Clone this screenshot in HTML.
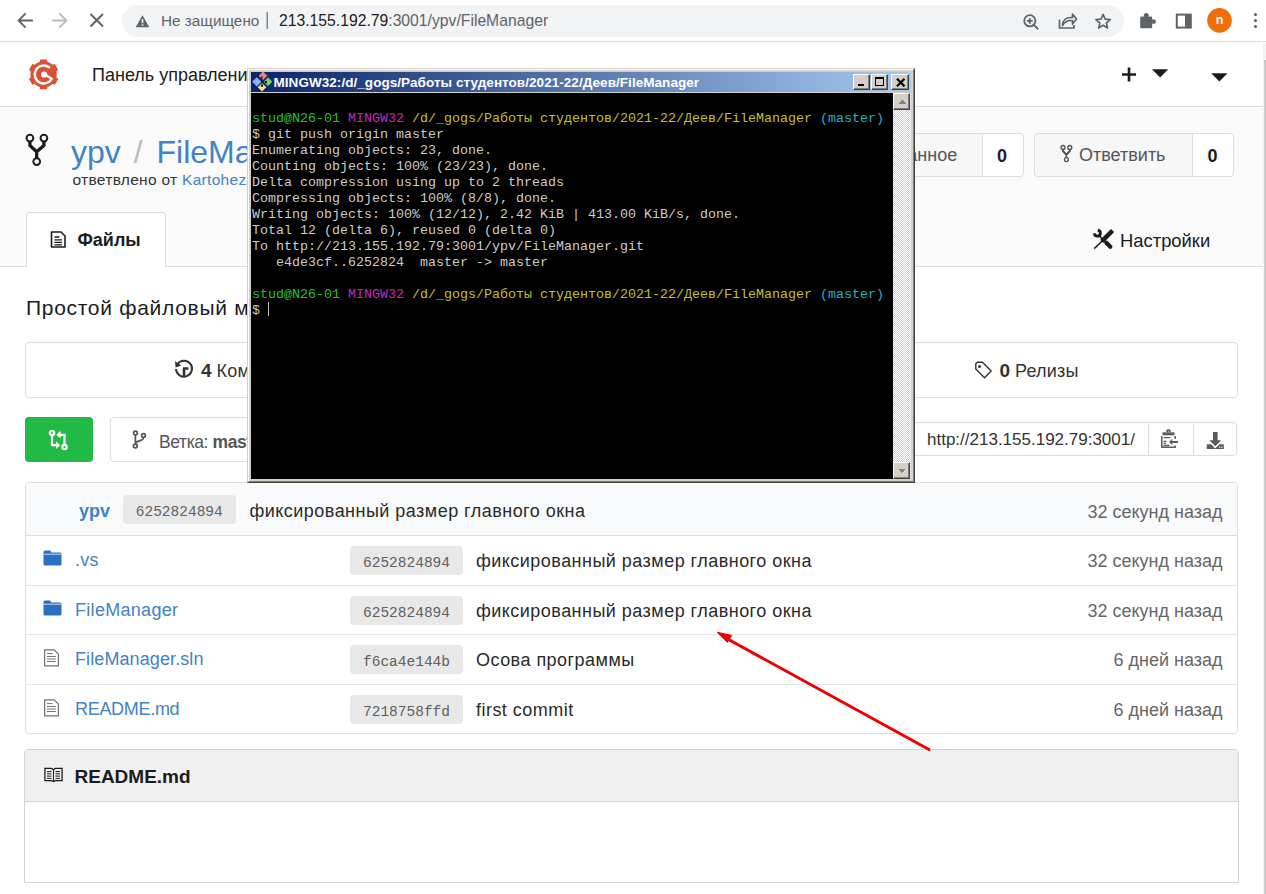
<!DOCTYPE html>
<html><head><meta charset="utf-8">
<style>
*{box-sizing:border-box;margin:0;padding:0}
html,body{width:1266px;height:894px;overflow:hidden;background:#fff;font-family:"Liberation Sans",sans-serif;color:#333}
.a{position:absolute}
.nw{white-space:nowrap}
/* chrome */
#chrome{left:0;top:0;width:1266px;height:42px;background:#fff;border-bottom:1px solid #dadce0}
#omni{left:122px;top:5px;width:1002px;height:32px;border-radius:16px;background:#f1f3f4}
/* gogs header */
#ghead{left:0;top:42px;width:1266px;height:65px;background:#fff;border-bottom:1px solid #ddd}
#rhead{left:0;top:107px;width:1266px;height:160px;background:#fafafa;border-bottom:1px solid #ddd}
.btn{border:1px solid #ddd;border-radius:4px}
.sha{background:#e8e8e8;border-radius:4px;font-family:"Liberation Mono",monospace;font-size:14.5px;color:#606060;text-align:center}
.term{font-family:"Liberation Mono",monospace;font-size:13.33px;line-height:16px;color:#cccccc;white-space:pre}
.g{color:#28c028}.m{color:#c028c0}.y{color:#c0c028}.c{color:#28b0c0}
.msg{font-size:18px;letter-spacing:0.47px;color:#2a2a2a}
.tm{font-size:18px;color:#666}
.fn{font-size:18px;letter-spacing:0.3px;color:#4183c4}
.tb{width:17px;height:16px;background:#d4d0c8;border-top:1px solid #fff;border-left:1px solid #fff;border-right:1px solid #404040;border-bottom:1px solid #404040;box-shadow:inset -1px -1px 0 #808080}
.sb{width:17px;height:17px;background:#d4d0c8;border-top:1px solid #fff;border-left:1px solid #fff;border-right:1px solid #404040;border-bottom:1px solid #404040;box-shadow:inset -1px -1px 0 #808080}
</style></head><body>

<!-- Chrome toolbar -->
<div id="chrome" class="a"></div>
<div id="omni" class="a"></div>

<!-- nav icons -->
<svg class="a" style="left:0;top:0" width="1266" height="42">
  <g fill="none" stroke="#5f6368" stroke-width="1.8" stroke-linecap="square">
    <path d="M32 20.5H19M25 14L18.5 20.5L25 27"/>
  </g>
  <g fill="none" stroke="#b9bbbe" stroke-width="1.8" stroke-linecap="square">
    <path d="M53 20.5H66M60 14L66.5 20.5L60 27"/>
  </g>
  <g fill="none" stroke="#5f6368" stroke-width="2">
    <path d="M90.5 14L103 26.5M103 14L90.5 26.5"/>
  </g>
  <path d="M142.5 15.2L149.3 27.2H135.7Z" fill="#5f6368"/>
  <rect x="141.7" y="19" width="1.6" height="4.2" fill="#f1f3f4"/>
  <rect x="141.7" y="24.2" width="1.6" height="1.6" fill="#f1f3f4"/>
  <rect x="266.5" y="12" width="1.5" height="17" fill="#80868b"/>
  <!-- zoom -->
  <g fill="none" stroke="#5f6368" stroke-width="1.8">
    <circle cx="1029.8" cy="20.8" r="5.6"/>
    <path d="M1034 25l4.3 4.3M1026.9 20.8h5.8M1029.8 17.9v5.8"/>
  </g>
  <!-- share -->
  <g fill="none" stroke="#5f6368" stroke-width="1.7" stroke-linejoin="round">
    <path d="M1059.5 19.5v8.5h14.5v-3"/>
    <path d="M1062.5 25.5c0-5 3.5-8 8.5-8h1.5v-3.5l4 5-4 5v-3.5h-1.5c-3.5 0-6.5 1.5-8.5 5z"/>
  </g>
  <!-- star -->
  <path d="M1103.10 14.30L1105.10 19.15L1110.33 19.55L1106.33 22.95L1107.57 28.05L1103.10 25.30L1098.63 28.05L1099.87 22.95L1095.87 19.55L1101.10 19.15z" fill="none" stroke="#5f6368" stroke-width="1.6" stroke-linejoin="round"/>
  <!-- puzzle -->
  <g fill="#5f6368"><rect x="1140.2" y="16.6" width="12" height="11.6" rx="1.3"/><circle cx="1146.3" cy="15.3" r="2.4"/><circle cx="1153.6" cy="21.6" r="2.4"/></g>
  <!-- sidebar -->
  <rect x="1176.8" y="14.6" width="14" height="13" fill="none" stroke="#5f6368" stroke-width="2"/>
  <rect x="1185" y="14.6" width="6" height="13" fill="#5f6368"/>
  <!-- avatar -->
  <circle cx="1219.5" cy="20.4" r="12.3" fill="#ed6f06"/>
  <!-- dots -->
  <g fill="#5f6368"><circle cx="1255.5" cy="14.5" r="1.6"/><circle cx="1255.5" cy="20.5" r="1.6"/><circle cx="1255.5" cy="26.5" r="1.6"/></g>
</svg>
<div class="a nw" style="left:1215.8px;top:13px;font-size:12.5px;font-weight:bold;color:#fff">n</div>
<div class="a nw" style="left:161px;top:11.5px;font-size:15.3px;color:#5f6368">Не защищено</div>
<div class="a nw" style="left:279px;top:11.5px;font-size:15.72px;color:#202124">213.155.192.79<span style="color:#5f6368">:3001/ypv/FileManager</span></div>

<!-- Gogs header -->
<div id="ghead" class="a"></div>

<svg class="a" style="left:0;top:42px" width="1266" height="65">
  <g transform="translate(43.6,32.4)">
    <path fill="#db5131" d="M-3.86 -12.62L-3.31 -14.94L3.31 -14.94L3.86 -12.62A13.2 13.2 0 0 1 9.00 -9.65L11.28 -10.34L14.59 -4.60L12.86 -2.97A13.2 13.2 0 0 1 12.86 2.97L14.59 4.60L11.28 10.34L9.00 9.65A13.2 13.2 0 0 1 3.86 12.62L3.31 14.94L-3.31 14.94L-3.86 12.62A13.2 13.2 0 0 1 -9.00 9.65L-11.28 10.34L-14.59 4.60L-12.86 2.97A13.2 13.2 0 0 1 -12.86 -2.97L-14.59 -4.60L-11.28 -10.34L-9.00 -9.65A13.2 13.2 0 0 1 -3.86 -12.62Z"/>
    <path fill="none" stroke="#fff" stroke-width="2.4" stroke-linecap="round" d="M5.6-7.1A9 9 0 1 0 8.1 4.4L3 1.2"/>
    <circle cx="0.5" cy="0.1" r="3.1" fill="#fff"/>
  </g>
  <path d="M1129 25.5v14M1122 32.5h14" stroke="#1b1c1d" stroke-width="2.6" fill="none"/>
  <path d="M1152 27.2h16.2l-8.1 8.4z" fill="#1b1c1d"/>
  <path d="M1211.2 31.2h16.3l-8.15 8.4z" fill="#1b1c1d"/>
</svg>
<div class="a nw" style="left:92px;top:65px;font-size:18px;color:#1b1c1d">Панель управления</div>

<!-- repo header -->
<div id="rhead" class="a"></div>

<svg class="a" style="left:20px;top:128px" width="36" height="42" viewBox="0 0 36 42">
  <g fill="none" stroke="#1b1c1d">
    <circle cx="9.9" cy="10.1" r="3.4" stroke-width="1.9"/>
    <circle cx="23.9" cy="10.1" r="3.4" stroke-width="1.9"/>
    <circle cx="16.7" cy="33.6" r="3.4" stroke-width="1.9"/>
    <path d="M9.9 13.5v4l6.8 6.2 7.2-6.2v-4M16.7 23.5v6.7" stroke-width="3.3"/>
  </g>
</svg>
<div class="a nw" style="left:71px;top:134px;font-size:32px;color:#4183c4">ypv <span style="color:#bbb;margin:0 5px 0 4px">/</span> FileManager</div>
<div class="a nw" style="left:72.5px;top:171px;font-size:15.5px;letter-spacing:0.3px;color:#333">ответвлено от <span style="color:#4183c4">Kartohez/FileManager</span></div>
<!-- star/watch buttons -->
<div class="a btn" style="left:800px;top:132.5px;width:223.5px;height:44px;background:#f7f7f7"></div>
<div class="a" style="left:982px;top:133.5px;width:40.5px;height:42px;background:#fff;border-left:1px solid #ddd;border-radius:0 4px 4px 0"></div>
<div class="a nw" style="left:866px;top:145px;font-size:18px;color:#555">Избранное</div>
<div class="a nw" style="left:997px;top:146px;font-size:18px;font-weight:bold;color:#1b1c1d">0</div>
<div class="a btn" style="left:1034.4px;top:132.5px;width:199.2px;height:44px;background:#f7f7f7"></div>
<div class="a" style="left:1191.6px;top:133.5px;width:41px;height:42px;background:#fff;border-left:1px solid #ddd;border-radius:0 4px 4px 0"></div>
<svg class="a" style="left:1055px;top:140px" width="22" height="26" viewBox="0 0 22 26">
  <g fill="none" stroke="#505050">
    <circle cx="8" cy="7.5" r="2" stroke-width="1.3"/>
    <circle cx="14.8" cy="7.5" r="2" stroke-width="1.3"/>
    <circle cx="11.4" cy="19.6" r="2" stroke-width="1.3"/>
    <path d="M8 9.5v1.5l3.4 3.8 3.4-3.8v-1.5M11.4 14.8v2.9" stroke-width="2"/>
  </g>
</svg>
<div class="a nw" style="left:1079px;top:145px;font-size:18px;color:#555">Ответвить</div>
<div class="a nw" style="left:1207.5px;top:146px;font-size:18px;font-weight:bold;color:#1b1c1d">0</div>
<!-- tabs -->
<div class="a" style="left:25.5px;top:212px;width:140.5px;height:56px;background:#fff;border:1px solid #ddd;border-bottom:none;border-radius:4px 4px 0 0"></div>
<svg class="a" style="left:50px;top:231px" width="17" height="17" viewBox="0 0 17 17">
  <path d="M1.5 1h9.5l4 4v11h-13.5z" fill="none" stroke="#1b1c1d" stroke-width="1.6" stroke-linejoin="round"/>
  <path d="M4.5 6h5M4.5 8.8h7.5M4.5 11.3h7.5M4.5 13.8h7.5" stroke="#1b1c1d" stroke-width="1.3"/>
</svg>
<div class="a nw" style="left:77.5px;top:230px;font-size:18px;font-weight:bold;color:#1b1c1d">Файлы</div>
<svg class="a" style="left:1085px;top:222px" width="34" height="34" viewBox="0 0 34 34">
  <path d="M9.4 11.4A3 3 0 1 0 12.8 8.2" fill="none" stroke="#1b1c1d" stroke-width="2.9"/>
  <path d="M14.3 13.8L19 18.5" stroke="#1b1c1d" stroke-width="1.6"/>
  <path d="M21.3 20.8L25.3 24.8" stroke="#1b1c1d" stroke-width="4.2" stroke-linecap="round"/>
  <path d="M26 10.1L18.3 17.8" stroke="#1b1c1d" stroke-width="4.4" stroke-linecap="square"/>
  <path d="M17.5 18.8L9.2 26.6" stroke="#1b1c1d" stroke-width="1.5"/>
</svg>
<div class="a nw" style="left:1120px;top:229.7px;font-size:18.4px;color:#1b1c1d">Настройки</div>


<div class="a nw" style="left:26px;top:296px;font-size:21px;letter-spacing:0.7px;color:#1b1c1d">Простой файловый менеджер</div>
<!-- stats -->
<div class="a btn" style="left:25px;top:342px;width:1213px;height:56px;background:#fff"></div>
<svg class="a" style="left:174px;top:359px" width="20" height="20" viewBox="0 0 20 20">
  <path d="M3.3 5.3A8 8 0 1 1 2 10" fill="none" stroke="#333" stroke-width="2"/>
  <path d="M1 2.2l0.6 6.2 5.8-2z" fill="#333"/>
  <path d="M9 9.5h5.5M10 9.5v8" stroke="#333" stroke-width="2.6"/>
</svg>
<div class="a nw" style="left:201px;top:360px;font-size:18px;color:#333"><b style="font-size:19px">4</b> <span style="letter-spacing:0.2px">Коммиты</span></div>
<svg class="a" style="left:974px;top:361px" width="20" height="18" viewBox="0 0 20 18">
  <path d="M1.8 2.8v5.2l8.7 8.7 6.7-6.7-8.7-8.7h-5.2z" fill="none" stroke="#333" stroke-width="1.4" stroke-linejoin="round"/>
  <circle cx="5.5" cy="5.5" r="1.5" fill="#333"/>
</svg>
<div class="a nw" style="left:999.5px;top:360px;font-size:18px;color:#333"><b style="font-size:19px">0</b> <span style="letter-spacing:0.2px">Релизы</span></div>
<!-- green button -->
<div class="a" style="left:25px;top:417px;width:68px;height:45px;background:#21ba45;border-radius:4px"></div>
<svg class="a" style="left:48px;top:429px" width="21" height="22" viewBox="0 0 21 22">
  <g fill="none" stroke="#fff" stroke-width="2.2">
    <circle cx="4" cy="4" r="2.2"/><circle cx="16.5" cy="18" r="2.2"/>
    <path d="M4 6.2v10h4.5M16.5 15.8v-10h-4.5"/>
  </g>
  <path d="M8 12.3l4.2 3.9-4.2 3.9zM12.5 1.8l-4.2 3.9 4.2 3.9z" fill="#fff"/>
</svg>
<!-- branch button -->
<div class="a btn" style="left:110px;top:417px;width:300px;height:45px;background:#fff"></div>
<svg class="a" style="left:132px;top:430px" width="16" height="20" viewBox="0 0 16 20">
  <g fill="none" stroke="#555" stroke-width="1.7">
    <circle cx="3.5" cy="3" r="1.9"/><circle cx="3.3" cy="16" r="1.9"/><circle cx="11.5" cy="5.5" r="1.9"/>
    <path d="M3.4 4.9v9.2M11.5 7.4c0 4.5-8.2 2.5-8.2 6.7"/>
  </g>
</svg>
<div class="a nw" style="left:159px;top:431.5px;font-size:17.5px;color:#555;letter-spacing:-0.4px">Ветка: <b>master</b></div>
<!-- clone -->
<div class="a btn" style="left:700px;top:422px;width:537px;height:34px;background:#fff"></div>
<div class="a" style="left:1148px;top:423.5px;width:1px;height:31px;background:#ddd"></div>
<div class="a" style="left:1192.5px;top:423.5px;width:1px;height:31px;background:#ddd"></div>
<div class="a nw" style="left:927px;top:430px;font-size:17px;color:#333">http://213.155.192.79:3001/</div>
<div class="a" style="left:1137px;top:424px;width:10px;height:30px;background:#fff"></div>
<svg class="a" style="left:1145px;top:418px" width="95" height="42" viewBox="0 0 95 42">
  <g fill="none" stroke="#5c5c5c">
    <path d="M16.8 18v11.3h13.4v-1.8M30.2 21v-3" stroke-width="1.5"/>
    <path d="M17.5 15.8h12" stroke-width="3"/>
    <path d="M21.5 13.8l1.5-1.5h1l1.5 1.5" stroke-width="2"/>
    <path d="M18.5 19.6h7M18.5 23.3h3M18.5 25.4h2.5M18.5 27.5h6" stroke-width="1.3"/>
    <path d="M33 24h-7.5" stroke-width="2"/>
  </g>
  <path d="M24 24l3.3-3.3v6.6z" fill="#5c5c5c"/>
  <path d="M68 14h4.6v8.2h3.6l-5.9 6-5.9-6h3.6z" fill="#5c5c5c"/>
  <path d="M61.8 26.3h4.4l4.1 4.2 4.1-4.2h4.4v4.7h-17z" fill="#5c5c5c"/>
  <rect x="74" y="28.6" width="1.3" height="1.1" fill="#fff"/><rect x="76.2" y="28.6" width="1.3" height="1.1" fill="#fff"/>
</svg>


<!-- table -->
<div class="a" style="left:25px;top:482px;width:1213px;height:252px;border:1px solid #ddd;border-radius:4px;background:#fff;overflow:hidden">
  <div class="a" style="left:0;top:0;width:1211px;height:53px;background:#f9fafb;border-bottom:1px solid #ddd"></div>
  <div class="a" style="left:0;top:102px;width:1211px;height:1px;background:#e5e5e5"></div>
  <div class="a" style="left:0;top:151px;width:1211px;height:1px;background:#e5e5e5"></div>
  <div class="a" style="left:0;top:201px;width:1211px;height:1px;background:#e5e5e5"></div>
</div>
<div class="a nw" style="left:79px;top:500.5px;font-size:18px;font-weight:bold;color:#4183c4">ypv</div>
<div class="a sha" style="left:123px;top:495px;width:112.5px;height:28.5px;padding-top:8.5px">6252824894</div>
<div class="a nw msg" style="left:249.5px;top:500.5px">фиксированный размер главного окна</div>
<div class="a nw tm" style="left:1087.5px;top:501.5px">32 секунд назад</div>

<svg class="a" style="left:43px;top:550px" width="19" height="16" viewBox="0 0 19 16"><path d="M0.5 2a1.5 1.5 0 0 1 1.5-1.5h5l1.5 2h8.5a1.5 1.5 0 0 1 1.5 1.5v10a1.5 1.5 0 0 1-1.5 1.5h-15a1.5 1.5 0 0 1-1.5-1.5z" fill="#2a6fc2"/><path d="M0.5 4.2h18" stroke="#f7f9fc" stroke-width="0.8"/></svg>
<div class="a nw fn" style="left:75px;top:549.7px">.vs</div>
<div class="a sha" style="left:350px;top:546px;width:113px;height:29px;padding-top:8.5px">6252824894</div>
<div class="a nw msg" style="left:476px;top:550.5px">фиксированный размер главного окна</div>
<div class="a nw tm" style="left:1087.5px;top:550.5px">32 секунд назад</div>

<svg class="a" style="left:43px;top:600px" width="19" height="16" viewBox="0 0 19 16"><path d="M0.5 2a1.5 1.5 0 0 1 1.5-1.5h5l1.5 2h8.5a1.5 1.5 0 0 1 1.5 1.5v10a1.5 1.5 0 0 1-1.5 1.5h-15a1.5 1.5 0 0 1-1.5-1.5z" fill="#2a6fc2"/><path d="M0.5 4.2h18" stroke="#f7f9fc" stroke-width="0.8"/></svg>
<div class="a nw fn" style="left:75px;top:599.7px">FileManager</div>
<div class="a sha" style="left:350px;top:596px;width:113px;height:29px;padding-top:8.5px">6252824894</div>
<div class="a nw msg" style="left:476px;top:600.5px">фиксированный размер главного окна</div>
<div class="a nw tm" style="left:1087.5px;top:600.5px">32 секунд назад</div>

<svg class="a" style="left:43px;top:649px" width="17" height="18" viewBox="0 0 17 18"><path d="M1.6 0.9h9.6l4.2 4.2v11.7h-13.8z" fill="none" stroke="#707070" stroke-width="1.2" stroke-linejoin="round"/><path d="M4 4.6h5.5M4 7.5h8.8M4 10h8.8M4 12.5h8.8" stroke="#707070" stroke-width="1"/></svg>
<div class="a nw fn" style="left:75px;top:648.7px;letter-spacing:0.1px">FileManager.sln</div>
<div class="a sha" style="left:350px;top:645px;width:113px;height:29px;padding-top:8.5px">f6ca4e144b</div>
<div class="a nw msg" style="left:476px;top:649.5px">Осова программы</div>
<div class="a nw tm" style="left:1113.5px;top:649.5px">6 дней назад</div>

<svg class="a" style="left:43px;top:699px" width="17" height="18" viewBox="0 0 17 18"><path d="M1.6 0.9h9.6l4.2 4.2v11.7h-13.8z" fill="none" stroke="#707070" stroke-width="1.2" stroke-linejoin="round"/><path d="M4 4.6h5.5M4 7.5h8.8M4 10h8.8M4 12.5h8.8" stroke="#707070" stroke-width="1"/></svg>
<div class="a nw fn" style="left:75px;top:698.7px;letter-spacing:-0.3px">README.md</div>
<div class="a sha" style="left:350px;top:695px;width:113px;height:29px;padding-top:8.5px">7218758ffd</div>
<div class="a nw msg" style="left:476px;top:699.5px">first commit</div>
<div class="a nw tm" style="left:1113.5px;top:699.5px">6 дней назад</div>

<!-- readme -->
<div class="a" style="left:24px;top:749px;width:1215px;height:134px;border:1px solid #d4d4d5;border-radius:4px 4px 0 0;background:#fff;overflow:hidden">
  <div class="a" style="left:0;top:0;width:1213px;height:52px;background:#f0f0f0;border-bottom:1px solid #d4d4d5"></div>
</div>
<svg class="a" style="left:43.5px;top:767.3px" width="19" height="15.5" viewBox="0 0 21 17">
  <path d="M1 1.5h7.5l2 1.5 2-1.5h7.5v13.5h-7.5l-2 1-2-1h-7.5z" fill="none" stroke="#1b1c1d" stroke-width="1.4"/>
  <path d="M10.5 3v12.5M3.3 5h5M3.3 7.5h5M3.3 10h5M3.3 12.5h5M12.7 5h5M12.7 7.5h5M12.7 10h5M12.7 12.5h5" stroke="#1b1c1d" stroke-width="1.1"/>
</svg>
<div class="a nw" style="left:74.5px;top:765.5px;font-size:19px;font-weight:bold;color:#1b1c1d">README.md</div>
<!-- page scrollbar -->
<div class="a" style="left:1263px;top:43px;width:3px;height:851px;background:#f4f4f4"></div>
<div class="a" style="left:1264px;top:60px;width:2px;height:834px;background:linear-gradient(to right,#dadada,#b4b4b4)"></div>

<!-- terminal window -->
<div class="a" style="left:247px;top:68px;width:668px;height:415px;background:#d4d0c8;border-top:1px solid #d4d0c8;border-left:1px solid #d4d0c8;border-right:1px solid #404040;border-bottom:1px solid #404040"></div>
<div class="a" style="left:248px;top:69px;width:666px;height:413px;border-top:1px solid #fff;border-left:1px solid #fff;border-right:1px solid #808080;border-bottom:1px solid #808080"></div>
<div class="a" style="left:251px;top:72px;width:660px;height:20px;background:linear-gradient(to right,#0a246a,#a6caf0)"></div>
<svg class="a" style="left:250px;top:70px" width="22" height="24" viewBox="0 0 22 24"><path d="M13 1.5L17.3 5.8L13 10.1L8.7 5.8z" fill="#f08484"/><path d="M6.8 7.200000000000001L11.399999999999999 11.8L6.8 16.4L2.2 11.8z" fill="#8ab4f8"/><path d="M18 7.500000000000001L22.3 11.8L18 16.1L13.7 11.8z" fill="#84d46c"/><path d="M12 13.0L16.3 17.3L12 21.6L7.7 17.3z" fill="#f8e48c"/><path d="M10 4.5l2.2 2.2" stroke="#e86a6a" stroke-width="1.2"/><circle cx="12" cy="12" r="1" fill="#102060"/><circle cx="16" cy="12" r="1.2" fill="#103010"/><circle cx="12" cy="15.8" r="1.2" fill="#201800"/><circle cx="11.8" cy="7.5" r="0.9" fill="#501020"/><path d="M12 8v7M12 12h3.5" stroke="#223" stroke-width="0.7" opacity="0.7"/></svg>
<div class="a nw" style="left:273.5px;top:74.8px;font-size:13.5px;letter-spacing:0.05px;font-weight:bold;color:#fff;line-height:16px">MINGW32:/d/_gogs/Работы студентов/2021-22/Деев/FileManager</div>
<!-- title buttons -->
<div class="a tb" style="left:853px;top:74px"><div class="a" style="left:4px;top:9px;width:6px;height:2px;background:#000"></div></div>
<div class="a tb" style="left:871px;top:74px"><div class="a" style="left:3px;top:2px;width:9px;height:9px;border:1px solid #000;border-top-width:2px"></div></div>
<div class="a tb" style="left:891px;top:74px;width:18px"><svg class="a" style="left:3.5px;top:3px" width="10" height="9"><path d="M1 0.8l7.5 7.5M8.5 0.8l-7.5 7.5" stroke="#000" stroke-width="2.2"/></svg></div>
<!-- console -->
<div class="a" style="left:251px;top:93px;width:642px;height:386px;background:#000"></div>
<div class="a" style="left:893px;top:93px;width:18px;height:386px;background-color:#ece9e2;background-image:repeating-conic-gradient(#d4d0c8 0 25%,#fff 0 50%);background-size:2px 2px"></div>
<div class="a sb" style="left:893px;top:93px"><svg class="a" style="left:4px;top:5px" width="9" height="6"><path d="M4.5 0.5L8.5 5H0.5z" fill="#808080"/></svg></div>
<div class="a sb" style="left:893px;top:461.5px"><svg class="a" style="left:4px;top:5px" width="9" height="6"><path d="M4.5 5.5L8.5 1H0.5z" fill="#808080"/><path d="M8.5 1L4.5 5.5" stroke="#fff" stroke-width="1"/></svg></div>
<pre class="a term" style="left:252px;top:110.5px"><span class="g">stud@N26-01</span> <span class="m">MINGW32</span> <span class="y">/d/_gogs/Работы студентов/2021-22/Деев/FileManager</span> <span class="c">(master)</span>
$ git push origin master
Enumerating objects: 23, done.
Counting objects: 100% (23/23), done.
Delta compression using up to 2 threads
Compressing objects: 100% (8/8), done.
Writing objects: 100% (12/12), 2.42 KiB | 413.00 KiB/s, done.
Total 12 (delta 6), reused 0 (delta 0)
To http://213.155.192.79:3001/ypv/FileManager.git
   e4de3cf..6252824  master -&gt; master

<span class="g">stud@N26-01</span> <span class="m">MINGW32</span> <span class="y">/d/_gogs/Работы студентов/2021-22/Деев/FileManager</span> <span class="c">(master)</span>
$ </pre>
<div class="a" style="left:268px;top:302px;width:1px;height:14px;background:#c0c0c0"></div>
<!-- red arrow -->
<svg class="a" style="left:0;top:0" width="1266" height="894">
  <path d="M929 749.5L724 637" stroke="#ee0000" stroke-width="3" stroke-linecap="round"/>
  <path d="M717 632.2L731.7 635.4L727.4 642.4z" fill="#ee0000" stroke="#ee0000" stroke-width="1" stroke-linejoin="round"/>
</svg>
</body></html>
